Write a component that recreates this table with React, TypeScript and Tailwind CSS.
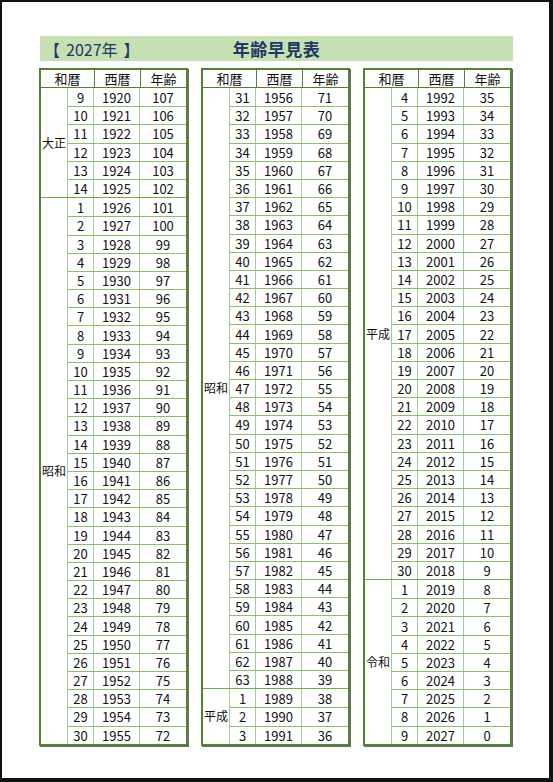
import React from 'react'

type Row = { n: number; year: number }
type Group = { era: string; rows: Row[] }

const BASE_YEAR = 2027

// 元号ごとの行を作る
function makeGroup(era: string, from: number, to: number, firstYear: number): Group {
    const rows: Row[] = []
    for (let n = from; n <= to; n++) {
        rows.push({ n, year: firstYear + (n - 1) })
    }
    return { era, rows }
}

const tables: Group[][] = [
    [makeGroup('大正', 9, 14, 1912), makeGroup('昭和', 1, 30, 1926)],
    [makeGroup('昭和', 31, 63, 1926), makeGroup('平成', 1, 3, 1989)],
    [makeGroup('平成', 4, 30, 1989), makeGroup('令和', 1, 9, 2019)],
]

const font = { fontFamily: '"Noto Sans CJK JP", "Noto Sans", sans-serif' }

function AgeTable({ groups }: { groups: Group[] }) {
    return (
        <div className="w-[149px] border-2 border-[#548235] bg-white shadow-[1px_1px_0_#6b6b6b]">
            <div className="flex h-[18px] border-b border-[#548235] text-[13px] leading-none text-[#111]">
                <div className="flex w-[54px] items-center justify-center border-r border-[#548235]">和暦</div>
                <div className="flex w-[46px] items-center justify-center border-r border-[#548235]">西暦</div>
                <div className="flex flex-1 items-center justify-center">年齢</div>
            </div>
            {groups.map((g, gi) => (
                <div key={g.era + gi} className={gi > 0 ? 'flex border-t border-[#70ad47]' : 'flex'}>
                    <div className="flex w-[27px] items-center whitespace-nowrap border-r border-[#a9c99a] pl-[1px] text-[12px] leading-none text-[#111]">
                        {g.era}
                    </div>
                    <div className="flex-1">
                        {g.rows.map((r, i) => (
                            <div
                                key={r.n}
                                className={
                                    i > 0
                                        ? 'flex h-[18.2px] border-t border-[#8cbf6a] text-[13px] leading-none text-[#111]'
                                        : 'flex h-[18.2px] text-[13px] leading-none text-[#111]'
                                }
                            >
                                <div className="flex w-[26px] items-center justify-center border-r border-[#a9c99a]">{r.n}</div>
                                <div className="flex w-[46px] items-center justify-center border-r border-[#a9c99a]">{r.year}</div>
                                <div className="flex flex-1 items-center justify-center">{BASE_YEAR - r.year}</div>
                            </div>
                        ))}
                    </div>
                </div>
            ))}
        </div>
    )
}

export default function App() {
    return (
        <div
            className="h-[782px] w-[553px] border-l-2 border-t-2 border-r-4 border-b-4 border-[#111] bg-white"
            style={font}
        >
            <div className="ml-[38px] mt-[34px] grid h-[25px] w-[473px] grid-cols-[1fr_auto_1fr] items-center bg-[#c6e0b4] text-[#203864]">
                <div className="flex items-center whitespace-nowrap pl-[4px] text-[16px] leading-none">
                    <span>【</span>
                    <span className="ml-[6px]">2027年</span>
                    <span className="ml-[6px]">】</span>
                </div>
                <div className="text-[17px] font-bold leading-none tracking-[0.5px]">年齢早見表</div>
                <div />
            </div>
            <div className="ml-[37px] mt-[7px] flex gap-[13px]">
                {tables.map((t, i) => (
                    <AgeTable key={i} groups={t} />
                ))}
            </div>
        </div>
    )
}
